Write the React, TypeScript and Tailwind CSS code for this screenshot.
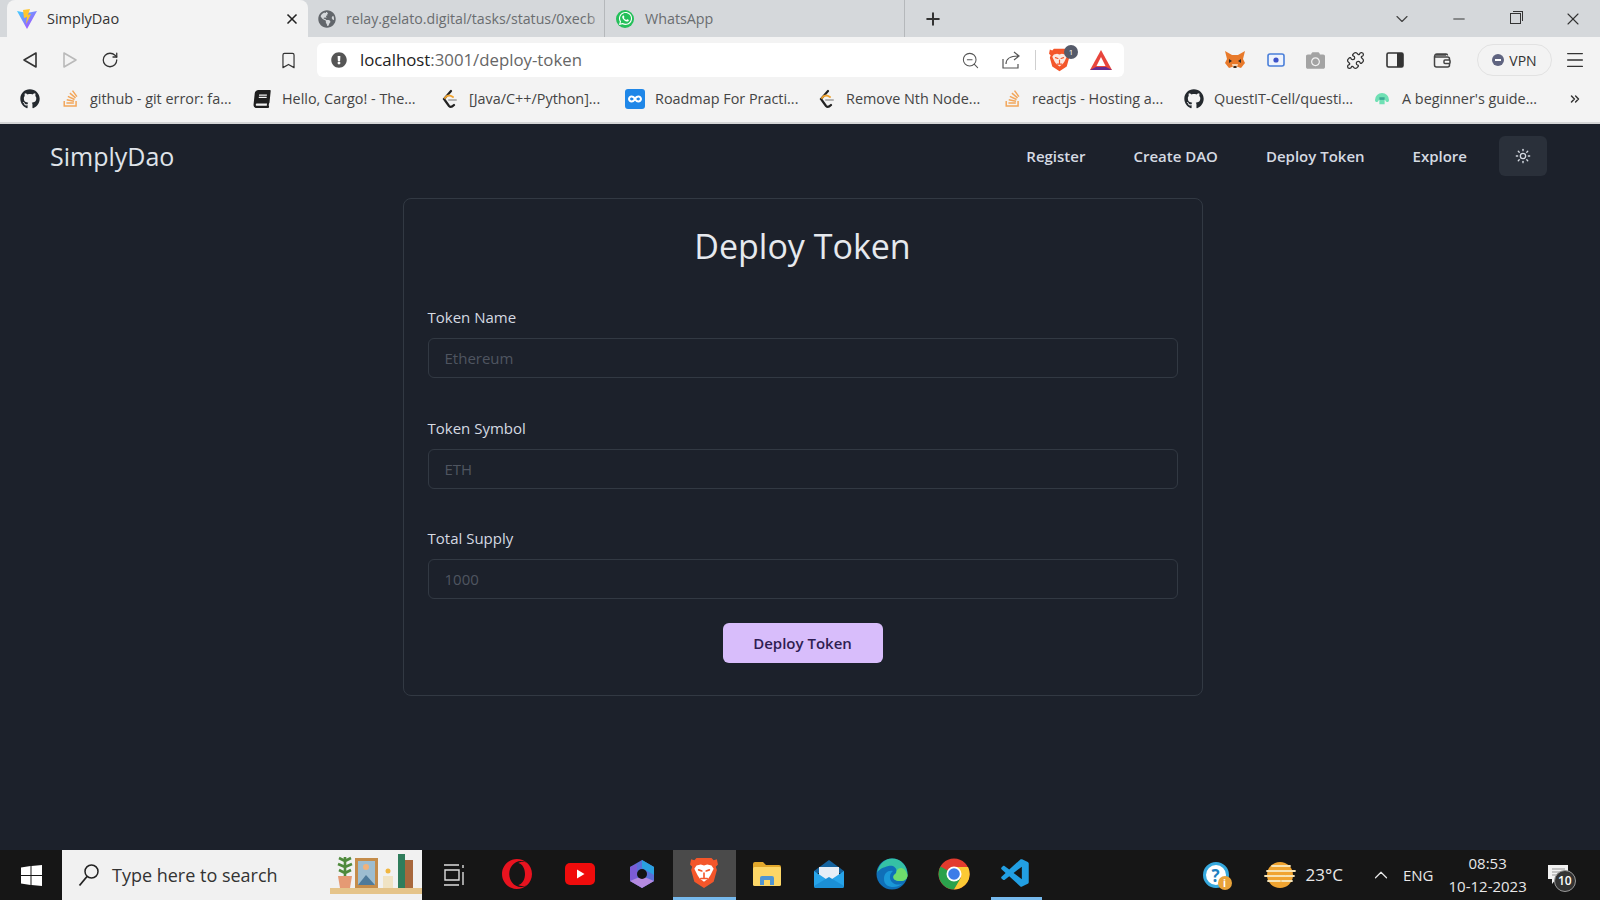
import React from "react";
import { Bookmark, ChevronDown, ChevronUp, ChevronsRight, Menu, Minus, Plus, Puzzle, RotateCw, Sun, X, ZoomOut } from "lucide-react";
import { FaGithub, FaStackOverflow, FaWhatsapp, FaGlobeAmericas, FaBook, FaInfinity, FaCamera, FaExclamationCircle } from "react-icons/fa";
import { SiOpera } from "react-icons/si";
import { VscVscode } from "react-icons/vsc";

function ViteLogo() {
    return (
        <svg width="22" height="22" viewBox="0 0 22 22">
            <defs>
                <linearGradient id="viteA" x1="0" y1="0" x2="1" y2="1">
                    <stop offset="0" stopColor="#41d1ff" />
                    <stop offset="1" stopColor="#bd34fe" />
                </linearGradient>
            </defs>
            <path d="M1 3l10 2 10-2-10 18z" fill="url(#viteA)" />
            <path d="M7 2l7-1-2 6 3-1-5 10 1-7-3 1z" fill="#ffc62e" />
        </svg>
    );
}

function BraveIcon({ size, badge }: { size: number; badge?: boolean }) {
    return (
        <svg width={size} height={size * 1.15} viewBox="0 0 26 30">
            <path d="M6 1h14l2 2 3-1 1 5-2 2 1 3-3 11-9 6-9-6L1 12l1-3-2-2 1-5 3 1z" fill="#f4562a" />
            <path d="M6 8l4-1 3 1 3-1 4 1 2 3-3 6-2 3-4 3-4-3-2-3-3-6z" fill={badge ? "#fbe9e2" : "#fff"} />
            <path d="M8 12l3 1M18 12l-3 1M13 15v4M10 20h6" stroke="#f4562a" strokeWidth="1.5" strokeLinecap="round" />
        </svg>
    );
}

function LeetIcon() {
    return (
        <svg width="20" height="20" viewBox="0 0 20 20" fill="none">
            <path d="M12 2L5 10l5 7c1 1 3 1 5-1" stroke="#222" strokeWidth="2.2" strokeLinecap="round" />
            <path d="M6 9c2-3 5-3 8-1" stroke="#f0a32f" strokeWidth="2" strokeLinecap="round" />
            <path d="M10 11h7" stroke="#b3b3b3" strokeWidth="2" strokeLinecap="round" />
        </svg>
    );
}

function FoxIcon() {
    return (
        <svg width="22" height="20" viewBox="0 0 22 20">
            <path d="M1 1l7 4h6l7-4-2 8 2 4-4 5-3-1h-6l-3 1-4-5 2-4z" fill="#e8792a" />
            <path d="M5 9l3 2-3 2zM17 9l-3 2 3 2z" fill="#2b2b2b" />
            <path d="M8 14h6l-1 4H9z" fill="#f4d3b5" />
            <path d="M9.5 16h3v2h-3z" fill="#33261d" />
        </svg>
    );
}

function BatIcon() {
    return (
        <svg width="24" height="22" viewBox="0 0 24 22">
            <path d="M12 1l11 20H1z" fill="#e8453c" />
            <path d="M1 21l6-3h10l6 3z" fill="#662d91" />
            <path d="M12 8l4.5 9h-9z" fill="#fff" />
        </svg>
    );
}

function ShareIcon() {
    return (
        <svg width="20" height="20" viewBox="0 0 20 20" fill="none" stroke="#555" strokeWidth="1.2">
            <path d="M2 9v9h15v-4" />
            <path d="M5 14c0-5 4-8 12-8M13 2l5 4-5 4" />
        </svg>
    );
}

function SidePanel() {
    return (
        <svg width="18" height="18" viewBox="0 0 18 18">
            <rect x="1" y="2" width="16" height="14" rx="1.5" fill="none" stroke="#333" strokeWidth="1.6" />
            <rect x="11" y="2" width="6" height="14" fill="#333" />
        </svg>
    );
}

function WalletIcon() {
    return (
        <svg width="18" height="18" viewBox="0 0 18 18" fill="none" stroke="#444" strokeWidth="1.5">
            <path d="M3 4h10M1.5 6.5C1.5 4 2 3 4 3h9c1 0 1.5.5 1.5 1.5M1.5 6v8c0 1 .5 2 2 2h11c1 0 2-.5 2-2V8c0-1-1-2-2-2z" />
            <rect x="11" y="9" width="6" height="3.5" rx="1" fill="#fff" />
        </svg>
    );
}

function CaptureIcon() {
    return (
        <svg width="18" height="16" viewBox="0 0 18 16">
            <rect x="1" y="2" width="16" height="12" rx="2" fill="#eef3fd" stroke="#4a7fd9" strokeWidth="1.6" />
            <circle cx="9" cy="8" r="2.6" fill="#3e53c9" />
        </svg>
    );
}

function BeginnerIcon() {
    return (
        <svg width="16" height="14" viewBox="0 0 18 16">
            <path d="M1 9a8 8 0 0 1 16 0c0 3-3 3-4 1l-1-2v6H6V8l-1 2c-1 2-4 2-4-1z" fill="#6fe0b4" />
            <path d="M6 6h6v3H6z" fill="#3aa893" />
        </svg>
    );
}

function RoadmapIcon() {
    return (
        <div className="flex h-[20px] w-[20px] items-center justify-center rounded-[3px] bg-[#1f87e8]">
            <FaInfinity className="text-white" size={14} />
        </div>
    );
}

function WhatsAppIcon() {
    return (
        <div className="flex h-[18px] w-[18px] items-center justify-center rounded-full bg-[#25c05a]">
            <FaWhatsapp className="text-white" size={15} />
        </div>
    );
}

function WindowsIcon() {
    return (
        <svg width="21" height="21" viewBox="0 0 21 21" fill="#fff">
            <path d="M0 2.500l9.500-1.500v9H0zM10.500 1L21 0v10h-10.500zM0 11h9.500v9L0 18.500zM10.500 11H21v10l-10.500-1z" />
        </svg>
    );
}

function YoutubeIcon() {
    return (
        <svg width="30" height="22" viewBox="0 0 30 22">
            <rect width="30" height="22" rx="5" fill="#f00c0c" />
            <path d="M12 6.500l7.500 4.500-7.500 4.500z" fill="#fff" />
        </svg>
    );
}

function OfficeIcon() {
    return (
        <svg width="28" height="30" viewBox="0 0 28 30" fill="none">
            <path d="M14 1l12 7v14l-12 7-12-7V8z" fill="#5a6fd8" />
            <path d="M14 1l12 7v8L14 9z" fill="#2aa0e0" />
            <path d="M2 8l7-3v14l-7 3z" fill="#7c5cd6" />
            <path d="M2 22l12-5 12 5-12 7z" fill="#b58ae0" />
            <circle cx="14" cy="15" r="5" fill="#141414" />
        </svg>
    );
}

function FolderIcon() {
    return (
        <svg width="28" height="26" viewBox="0 0 28 26">
            <path d="M0 3a2 2 0 0 1 2-2h8l3 3h13a2 2 0 0 1 2 2v3H0z" fill="#e2a82c" />
            <rect y="6" width="28" height="19" rx="1.5" fill="#fcd667" />
            <path d="M7 24v-7a2 2 0 0 1 2-2h10a2 2 0 0 1 2 2v7h-4v-5h-6v5z" fill="#4f95d2" />
        </svg>
    );
}

function MailIcon() {
    return (
        <svg width="30" height="28" viewBox="0 0 30 28">
            <path d="M0 11L15 0l15 11v2H0z" fill="#14639f" />
            <path d="M5 7h20v12H5z" fill="#e6eef7" />
            <path d="M0 11l15 10 15-10v15a2 2 0 0 1-2 2H2a2 2 0 0 1-2-2z" fill="#27a4ea" />
            <path d="M0 26l15-9 15 9v0a2 2 0 0 1-2 2H2a2 2 0 0 1-2-2z" fill="#1b8fd6" />
        </svg>
    );
}

function EdgeIcon() {
    return (
        <svg width="32" height="32" viewBox="0 0 32 32">
            <circle cx="16" cy="16" r="15.500" fill="#0f6fb8" />
            <path d="M1 15C3 5 10 .5 16 .5 25 .5 31.500 8 31.500 17c0 4-3 6-7 6-5 0-8-2-7-5 1-2 3-2 3-5 0-4-4-6-8-5C7 9.500 3 11 1 15z" fill="#35c1a5" />
            <path d="M31.500 17c0 4-3 6-7 6-5 0-8-2-7-5 1-2 3-2 3-5 2-4 8-5 11 4z" fill="#6fdc6c" />
            <path d="M8 21c0-6 4-9 9-8-3 2-5 8 0 12 3 2 7 2 10 0-5 6-19 6-19-4z" fill="#1a98d8" />
        </svg>
    );
}

function ChromeIcon() {
    return (
        <svg width="32" height="32" viewBox="0 0 32 32">
            <circle cx="16" cy="16" r="15.500" fill="#e33b2e" />
            <path d="M16 16L2.500 8.500A15.500 15.500 0 0 0 16 31.500l7-11z" fill="#2ba24c" />
            <path d="M16 9h14a15.500 15.500 0 0 1-14 22.500l7-12z" fill="#fcc934" />
            <circle cx="16" cy="16" r="7.500" fill="#fff" />
            <circle cx="16" cy="16" r="5.800" fill="#3b7de8" />
        </svg>
    );
}

function WeatherIcon() {
    return (
        <svg width="32" height="28" viewBox="0 0 32 28">
            <circle cx="16" cy="14" r="13" fill="#f0a431" />
            <path d="M3 10h28M1 15h20M22 15h8M4 20h12M18 20h10M8 5h18" stroke="#f7e3b4" strokeWidth="1.800" strokeLinecap="round" />
        </svg>
    );
}

function HelpIcon() {
    return (
        <div className="relative flex h-[26px] w-[26px] items-center justify-center rounded-full border-[3px] border-[#36a9de] bg-white text-[17px] font-bold leading-none text-[#1f7fc0]">
            ?
            <span className="absolute -bottom-[5px] -right-[6px] flex h-[14px] w-[14px] items-center justify-center rounded-full bg-[#e8a33a] text-[10px] text-white">i</span>
        </div>
    );
}

function SearchGlass() {
    return (
        <svg width="22" height="24" viewBox="0 0 22 24" fill="none" stroke="#222" strokeWidth="1.500">
            <circle cx="13.500" cy="8.500" r="6.500" />
            <path d="M9 13.500L1.500 22.500" strokeWidth="1.800" />
        </svg>
    );
}

function ShelfArt() {
    return (
        <svg width="94" height="50" viewBox="0 0 94 50">
            <rect x="2" y="38" width="92" height="6" fill="#e5c48a" />
            <path d="M10 26h14l-2 12H12z" fill="#e59a74" />
            <path d="M17 26V7M17 11l-6-3M17 11l6-3M17 17l-7-3M17 17l7-3M17 23l-6-3M17 23l6-3" stroke="#4f8a3c" strokeWidth="2.600" />
            <rect x="27" y="8" width="23" height="30" fill="#c48c4a" />
            <rect x="30" y="11" width="17" height="24" fill="#9dbdd0" />
            <circle cx="38" cy="17" r="3" fill="#f2b27a" />
            <path d="M30 35l8-10 9 10z" fill="#4e7a9a" />
            <rect x="55" y="26" width="10" height="12" fill="#f0e3c4" />
            <circle cx="60" cy="21" r="2.500" fill="#f1b640" />
            <rect x="70" y="4" width="7" height="34" fill="#2f7d5c" />
            <rect x="77" y="10" width="8" height="28" fill="#a8683d" />
        </svg>
    );
}

const bookmarks = [
    { label: "github - git error: fa...", w: "w-[192px]", icon: <FaStackOverflow className="text-[#f2a65a]" size={19} /> },
    { label: "Hello, Cargo! - The...", w: "w-[187px]", icon: <FaBook className="-skew-x-6 text-[#1f1f1f]" size={18} /> },
    { label: "[Java/C++/Python]...", w: "w-[186px]", icon: <LeetIcon /> },
    { label: "Roadmap For Practi...", w: "w-[191px]", icon: <RoadmapIcon /> },
    { label: "Remove Nth Node...", w: "w-[186px]", icon: <LeetIcon /> },
    { label: "reactjs - Hosting a...", w: "w-[182px]", icon: <FaStackOverflow className="text-[#f2a65a]" size={19} /> },
    { label: "QuestIT-Cell/questi...", w: "w-[188px]", icon: <FaGithub className="text-[#24292e]" size={20} /> },
    { label: "A beginner's guide...", w: "w-[196px]", icon: <BeginnerIcon /> },
];

const fields = [
    { label: "Token Name", placeholder: "Ethereum" },
    { label: "Token Symbol", placeholder: "ETH" },
    { label: "Total Supply", placeholder: "1000" },
];

const taskIcons = [
    <SiOpera key="opera" className="text-[#e8131f]" size={30} />,
    <YoutubeIcon key="yt" />,
    <OfficeIcon key="office" />,
    <BraveIcon key="brave" size={28} />,
    <FolderIcon key="folder" />,
    <MailIcon key="mail" />,
    <EdgeIcon key="edge" />,
    <ChromeIcon key="chrome" />,
    <VscVscode key="vscode" className="text-[#229fe3]" size={34} />,
];

function BrowserChrome() {
    return (
        <div className="shrink-0 font-['Open_Sans',sans-serif]">
            {/* tab strip */}
            <div className="flex h-[37px] items-center bg-[#d5d8db] pl-[7px]">
                <div className="flex h-[37px] w-[301px] items-center rounded-t-[8px] bg-[#f3f3f3] pl-[9px] pr-[8px]">
                    <ViteLogo />
                    <span className="ml-[9px] flex-1 text-[14.500px] text-[#333]">SimplyDao</span>
                    <X size={16} strokeWidth={2.500} className="text-[#222]" />
                </div>
                <div className="relative flex h-[37px] w-[297px] items-center overflow-hidden border-r border-[#b5b8bb] pl-[10px]">
                    <FaGlobeAmericas size={18} className="shrink-0 text-[#62666b]" />
                    <span className="ml-[10px] whitespace-nowrap text-[14.200px] text-[#6a6d70]">relay.gelato.digital/tasks/status/0xecb</span>
                    <div className="absolute inset-y-0 right-0 w-[16px] bg-gradient-to-r from-transparent to-[#d5d8db]" />
                </div>
                <div className="flex h-[37px] w-[300px] items-center border-r border-[#b5b8bb] pl-[11px]">
                    <WhatsAppIcon />
                    <span className="ml-[11px] text-[14.300px] text-[#6a6d70]">WhatsApp</span>
                </div>
                <Plus size={20} strokeWidth={2.400} className="ml-[18px] text-[#333]" />
                <ChevronDown size={20} strokeWidth={1.400} className="ml-[449px] text-[#444]" />
                <Minus size={18} strokeWidth={1.300} className="ml-[38px] text-[#333]" />
                <div className="relative ml-[42px] h-[11px] w-[11px] border border-[#333] bg-[#d5d8db] after:absolute after:-right-[3px] after:-top-[3px] after:h-[10px] after:w-[10px] after:border-r after:border-t after:border-[#333]" />
                <X size={20} strokeWidth={1.300} className="ml-[42px] text-[#333]" />
            </div>
            {/* toolbar */}
            <div className="flex h-[41px] items-center bg-[#f3f3f3] pb-[1px] pt-[6px]">
                <svg width="16" height="18" viewBox="0 0 16 18" fill="none" stroke="#333" strokeWidth="1.600" strokeLinejoin="round" className="ml-[22px]"><path d="M14 2v14L2 9z" /></svg>
                <svg width="16" height="18" viewBox="0 0 16 18" fill="none" stroke="#b9b9b9" strokeWidth="1.600" strokeLinejoin="round" className="ml-[24px]"><path d="M2 2v14l12-7z" /></svg>
                <RotateCw size={18} strokeWidth={1.700} className="ml-[23px] text-[#333]" />
                <Bookmark size={19} strokeWidth={1.500} className="ml-[160px] text-[#333]" />
                <div className="ml-[19px] flex h-[34px] w-[807px] items-center rounded-[6px] bg-white pl-[14px] pr-[11px]">
                    <FaExclamationCircle size={16} className="text-[#555]" />
                    <span className="ml-[13px] flex-1 text-[16.800px] text-[#666]"><span className="text-[#222]">localhost</span>:3001/deploy-token</span>
                    <ZoomOut size={19} strokeWidth={1.300} className="text-[#555]" />
                    <div className="ml-[21px]"><ShareIcon /></div>
                    <div className="ml-[14px] h-[20px] w-px bg-[#cfcfcf]" />
                    <div className="relative ml-[13px]">
                        <BraveIcon size={21} badge />
                        <span className="absolute -right-[8px] -top-[3px] flex h-[14px] w-[14px] items-center justify-center rounded-full bg-[#555a69] text-[8px] text-white">1</span>
                    </div>
                    <div className="ml-[19px]"><BatIcon /></div>
                </div>
                <div className="ml-[100px]"><FoxIcon /></div>
                <div className="ml-[21px]"><CaptureIcon /></div>
                <FaCamera size={19} className="ml-[21px] text-[#a3a3a3]" />
                <Puzzle size={19} strokeWidth={1.600} className="ml-[21px] text-[#333]" />
                <div className="ml-[21px]"><SidePanel /></div>
                <div className="ml-[29px]"><WalletIcon /></div>
                <div className="ml-[26px] flex h-[32px] w-[75px] items-center justify-center gap-[5px] rounded-full border border-[#e2e2e2] text-[14px] text-[#333]">
                    <span className="flex h-[12px] w-[12px] items-center justify-center rounded-full bg-[#5f6480]"><span className="h-[2px] w-[6px] bg-white" /></span>
                    VPN
                </div>
                <Menu size={22} strokeWidth={1.500} className="ml-[12px] text-[#333]" />
            </div>
            {/* bookmarks bar */}
            <div className="flex h-[46px] items-center border-b-[2px] border-[#d4d5d6] bg-[#f3f3f3] pb-[2px] pl-[20px]">
                <div className="w-[40px]"><FaGithub size={20} className="text-[#24292e]" /></div>
                {bookmarks.map((b) => (
                    <div key={b.label} className={`flex items-center gap-[10px] ${b.w}`}>
                        <span className="flex w-[20px] justify-center">{b.icon}</span>
                        <span className="whitespace-nowrap text-[14.400px] text-[#444]">{b.label}</span>
                    </div>
                ))}
                <ChevronsRight size={14} strokeWidth={2.500} className="text-[#333]" />
            </div>
        </div>
    );
}

function Page() {
    return (
        <div className="min-h-0 flex-1 bg-[#1c212b] font-['Open_Sans',sans-serif]">
            <nav className="flex h-[64px] items-center pl-[50px] pr-[53px]">
                <span className="flex-1 pt-[2px] text-[25px] text-[#dfe3e9]">SimplyDao</span>
                <div className="flex items-center text-[15px] font-semibold text-[#d5dae2]">
                    <a className="mr-[48px]">Register</a>
                    <a className="mr-[48px]">Create DAO</a>
                    <a className="mr-[48px]">Deploy Token</a>
                    <a className="mr-[32px]">Explore</a>
                    <button className="flex h-[40px] w-[48px] items-center justify-center rounded-[6px] bg-[#2a303a]">
                        <Sun size={16} className="text-[#d5dae2]" />
                    </button>
                </div>
            </nav>
            <div className="mt-[10px] flex justify-center pl-[5px]">
                <div className="w-[800px] rounded-[8px] border border-[#323943] px-[24px] pb-[32px] pt-[27px]">
                    <h1 className="mb-[40px] text-center text-[34px] leading-[40px] text-[#e6e9ee]">Deploy Token</h1>
                    <div className="mb-[24px] flex flex-col gap-[38.500px]">
                        {fields.map((f) => (
                            <div key={f.label}>
                                <label className="mb-[9px] block text-[15px] leading-[23px] text-[#d5dae2]">{f.label}</label>
                                <input
                                    placeholder={f.placeholder}
                                    className="h-[40px] w-full rounded-[6px] border border-[#323943] bg-transparent px-[16px] text-[15px] outline-none placeholder:text-[#4f5560]"
                                />
                            </div>
                        ))}
                    </div>
                    <div className="flex justify-center">
                        <button className="h-[40px] w-[160px] rounded-[6px] bg-[#d8bdfb] text-[15px] font-semibold text-[#2f1d52]">Deploy Token</button>
                    </div>
                </div>
            </div>
        </div>
    );
}

function Taskbar() {
    return (
        <div className="flex h-[50px] shrink-0 items-center bg-[#161616] font-['Open_Sans',sans-serif]">
            <div className="flex h-full w-[62px] items-center justify-center">
                <WindowsIcon />
            </div>
            <div className="flex h-full w-[360px] items-center overflow-hidden bg-[#f1f1f1] pl-[16px]">
                <SearchGlass />
                <span className="ml-[12px] flex-1 text-[18px] text-[#333]">Type here to search</span>
                <ShelfArt />
            </div>
            <div className="flex h-full w-[64px] items-center justify-center">
                <svg width="22" height="24" viewBox="0 0 22 24" fill="none" stroke="#ddd" strokeWidth="1.400"><path d="M1 2h15M1 22h15M2 7h14v10H2zM20 2v3M20 9v13" /></svg>
            </div>
            {taskIcons.map((icon, i) => (
                <div
                    key={i}
                    className={`flex h-full items-center justify-center border-b-[3px] ${i === 3 ? "w-[62.400px] border-[#76b9ed] bg-[#4a4a4a]" : i === 8 ? "mx-[6px] w-[50.400px] border-[#76b9ed]" : "w-[62.400px] border-transparent"}`}
                >
                    {icon}
                </div>
            ))}
            <div className="ml-[155px]"><HelpIcon /></div>
            <div className="ml-[35px]"><WeatherIcon /></div>
            <span className="ml-[10px] text-[17px] text-[#e8e8e8]">23°C</span>
            <ChevronUp size={22} strokeWidth={1.300} className="ml-[27px] text-[#e8e8e8]" />
            <span className="ml-[11px] text-[15px] text-[#e8e8e8]">ENG</span>
            <div className="ml-[15px] text-center text-[15px] leading-[23px] text-[#e8e8e8]">
                <div>08:53</div>
                <div>10-12-2023</div>
            </div>
            <div className="relative ml-[20px]">
                <svg width="24" height="22" viewBox="0 0 24 22"><path d="M1 1h20v14H9l-4 5v-5H1z" fill="#f2f2f2" /><path d="M5 5h13M5 8h13M5 11h13" stroke="#999" /></svg>
                <span className="absolute -bottom-[6px] -right-[5px] flex h-[22px] w-[22px] items-center justify-center rounded-full border border-[#999] bg-[#333] text-[12px] font-semibold text-white">10</span>
            </div>
        </div>
    );
}

export default function App() {
    return (
        <div className="flex h-screen w-full flex-col overflow-hidden">
            <BrowserChrome />
            <Page />
            <Taskbar />
        </div>
    );
}
